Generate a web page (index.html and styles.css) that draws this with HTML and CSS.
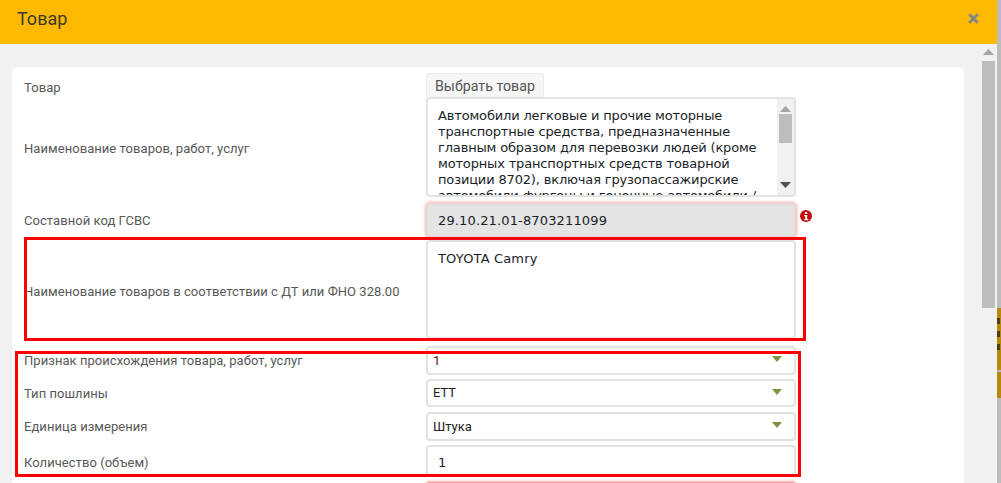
FILE: index.html
```html
<!DOCTYPE html>
<html lang="ru">
<head>
<meta charset="utf-8">
<title>Товар</title>
<link rel="stylesheet" href="styles.css">
</head>
<body>
<div class="modal">
  <header class="modal-head">
    <h1 class="modal-title">Товар</h1>
    <svg class="close" width="11" height="11" viewBox="0 0 11 11"><path d="M1.300 1.300 9.700 9.700M9.700 1.300 1.300 9.700" stroke="#858585" stroke-width="3" fill="none"/></svg>
  </header>
  <div class="modal-body">
    <div class="content">
      <form class="card">
        <div class="row row-button">
          <label class="label">Товар</label>
          <div class="control"><button type="button" class="pick">Выбрать товар</button></div>
        </div>
        <div class="row row-desc">
          <label class="label">Наименование товаров, работ, услуг</label>
          <div class="control">
            <div class="field area area-desc">
              <div class="area-text area-cyr">Автомобили легковые и прочие моторные транспортные средства, предназначенные главным образом для перевозки людей (кроме моторных транспортных средств товарной позиции 8702), включая грузопассажирские автомобили-фургоны и гоночные автомобили / </div>
              <div class="mini-scroll">
                <svg class="arrow" width="11" height="6" viewBox="0 0 11 6"><path d="M5.500 0 11 6H0z" fill="#a3a3a3"/></svg>
                <div class="mini-thumb"></div>
                <svg class="arrow arrow-down" width="11" height="6" viewBox="0 0 11 6"><path d="M0 0h11L5.500 6z" fill="#505050"/></svg>
              </div>
            </div>
          </div>
        </div>
        <div class="row row-code">
          <label class="label">Составной код ГСВС</label>
          <div class="control">
            <div class="field code invalid">29.10.21.01-8703211099</div>
            <svg class="info" width="12" height="12" viewBox="0 0 12 12"><circle cx="6" cy="6" r="6" fill="#c40b0b"/><rect x="4.900" y="2" width="2.300" height="2" fill="#fff"/><path d="M4.200 5h3v4h1v1.300H4.200V9h1V6.300h-1z" fill="#fff"/></svg>
          </div>
        </div>
        <div class="row row-name">
          <label class="label label-low">Наименование товаров в соответствии с ДТ или ФНО 328.00</label>
          <div class="control">
            <div class="field area area-name"><div class="area-text area-lat">TOYOTA Camry</div></div>
          </div>
        </div>
        <div class="row row-origin">
          <label class="label">Признак происхождения товара, работ, услуг</label>
          <div class="control"><div class="field select select-origin"><span class="origin-value">1</span><i class="caret"></i></div></div>
        </div>
        <div class="row row-duty">
          <label class="label label-nudge">Тип пошлины</label>
          <div class="control"><div class="field select"><span>ЕТТ</span><i class="caret"></i></div></div>
        </div>
        <div class="row row-unit">
          <label class="label">Единица измерения</label>
          <div class="control"><div class="field select"><span>Штука</span><i class="caret"></i></div></div>
        </div>
        <div class="row row-qty">
          <label class="label label-qty">Количество (объем)</label>
          <div class="control"><div class="field qty">1</div></div>
        </div>
        <div class="row row-next">
          <div class="label"></div>
          <div class="control"><div class="field next"></div></div>
        </div>
      </form>
    </div>
    <div class="page-scroll">
      <svg class="arrow-page" width="11" height="6" viewBox="0 0 11 6"><path d="M5.500 0 11 6H0z" fill="#a3a3a3"/></svg>
      <div class="page-thumb"></div>
    </div>
    <div class="mark mark-one"></div>
    <div class="mark mark-two"></div>
  </div>
</div>
<aside class="behind">
  <div class="behind-top"></div>
  <div class="behind-block">
    <i class="speck speck-a"></i>
    <i class="speck speck-b"></i>
    <i class="speck speck-c"></i>
  </div>
  <div class="behind-block behind-short"></div>
</aside>
</body>
</html>
```
FILE: styles.css
```css
* { box-sizing: border-box; }
html, body { margin: 0; height: 483px; overflow: hidden; }
body { display: flex; width: 1001px; background: #bcbcbc; font-family: Roboto, sans-serif; }

.modal { width: 997px; height: 483px; display: flex; flex-direction: column; flex: none; }
.modal-head { height: 44px; flex: none; background: #ffba00; display: flex; align-items: center; justify-content: space-between; padding: 0 18px 7px 17px; }
.modal-title { margin: 0; font: 400 18px/24px Roboto, sans-serif; color: #3b3a2c; }

.modal-body { position: relative; flex: 1; min-height: 0; display: flex; background: #f1f1f1; overflow: hidden; }
.content { flex: 1; min-width: 0; padding: 23px 18px 0 12px; }
.card { background: #fff; border-radius: 6px 6px 0 0; width: 952px; height: 420px; padding: 6px 12px 0; }

.row { display: flex; align-items: center; }
.label { width: 402px; flex: none; font-size: 13px; line-height: 16px; letter-spacing: .05px; color: #585858; }
.label-low { padding-top: 5px; }
.label-nudge { padding-top: 1px; }
.label-qty { padding-top: 3px; }
.control { width: 370px; flex: none; position: relative; }

.row-button { height: 24px; }
.row-button .label { padding-top: 5px; }
.row-desc { height: 100px; }
.row-desc .label { padding-top: 3px; }
.row-code { height: 34px; margin-top: 6px; }
.row-code .label { padding-top: 1px; }
.row-name { height: 99px; margin-top: 3px; }
.row-origin { height: 29px; margin-top: 7px; }
.row-duty { height: 28px; margin-top: 4px; }
.row-unit { height: 29px; margin-top: 5px; }
.row-qty { height: 32px; margin-top: 4px; }
.row-next { height: 30px; margin-top: 5px; }

.pick { display: block; width: 118px; height: 24px; padding: 0; border: 1px solid #ececec; border-bottom: 0; border-radius: 3px 3px 0 0; background: #f6f6f6; font: 400 14.250px/24px Roboto, sans-serif; color: #555; }

.field { width: 100%; border: 2px solid #e2e2e2; border-radius: 4px; background: #fff; }
.area-text, .code, .qty { font: 13px/16px "DejaVu Sans", sans-serif; color: #1a1e28; }
.area { position: relative; overflow: hidden; padding: 9px 10px 0; }
.area-desc { height: 100px; padding-right: 30px; }
.area-name { height: 99px; }
.area-text { width: 340px; }
.area-cyr { letter-spacing: -.16px; }
.area-lat { letter-spacing: .16px; }
.mini-scroll { position: absolute; top: 0; right: 0; bottom: 0; width: 17px; background: #f1f1f1; display: flex; flex-direction: column; align-items: center; padding-top: 7px; }
.mini-thumb { width: 13px; height: 29px; margin-top: 2px; background: #bdbdbd; }
.arrow { flex: none; }
.arrow-down { margin-top: auto; margin-bottom: 7px; }

.code { height: 34px; line-height: 32px; padding: 0 10px; letter-spacing: .14px; background: #e4e4e4; }
.invalid { border-color: #e4dada; box-shadow: 0 0 3px 1px rgba(240, 70, 70, .45); }
.info { position: absolute; left: 374px; top: 7px; }

.select { min-height: 28px; display: flex; align-items: center; justify-content: space-between; padding: 0 12px 0 5px; font: 13px/16px Roboto, sans-serif; color: #222; }
.row-origin .select { height: 29px; }
.row-duty .select { height: 28px; }
.row-unit .select { height: 29px; }
.origin-value { color: #5a1414; }
.caret { width: 0; height: 0; margin-bottom: 3px; border-left: 5px solid transparent; border-right: 5px solid transparent; border-top: 6px solid #7a9440; }

.qty { height: 32px; line-height: 31px; padding: 0 10px; }
.next { height: 30px; border-color: #f09a9a; box-shadow: 0 0 3px 1px rgba(240, 70, 70, .45); }

.page-scroll { width: 13px; flex: none; margin-right: 2px; display: flex; flex-direction: column; align-items: center; padding-top: 5px; }
.arrow-page { flex: none; }
.page-thumb { width: 13px; height: 247px; margin-top: 6px; background: #bdbdbd; flex: none; }

.mark { position: absolute; border: 3px solid #fe0000; pointer-events: none; }
.mark-one { left: 24px; top: 193px; width: 782px; height: 104px; }
.mark-two { left: 15px; top: 307px; width: 786px; height: 126px; }

.behind { width: 4px; height: 483px; flex: none; display: flex; flex-direction: column; overflow: hidden; }
.behind-top { height: 308px; flex: none; }
.behind-block { height: 62px; flex: none; background: #b88a04; overflow: hidden; padding-top: 10px; display: flex; flex-direction: column; gap: 7px; }
.speck { display: block; width: 3px; height: 6px; flex: none; background: #4a3f1c; }
.behind-short { height: 26px; margin-top: 2px; }
```
